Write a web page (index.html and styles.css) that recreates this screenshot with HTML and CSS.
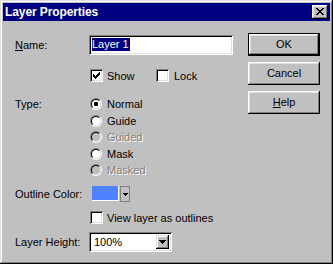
FILE: index.html
```html
<!DOCTYPE html>
<html>
<head>
<meta charset="utf-8">
<link rel="stylesheet" href="styles.css">
</head>
<body>
<div class="window">
  <div class="titlebar">
    <span class="title">Layer Properties</span>
    <div class="close">
      <svg width="8" height="7" viewBox="0 0 8 7" shape-rendering="crispEdges"><path d="M0 0h2v1H0zM6 0h2v1H6zM1 1h2v1H1zM5 1h2v1H5zM2 2h4v1H2zM3 3h2v1H3zM2 4h4v1H2zM1 5h2v1H1zM5 5h2v1H5zM0 6h2v1H0zM6 6h2v1H6z" fill="#000"/></svg>
    </div>
  </div>
  <div class="body">
    <div class="form">
      <div class="row row-name">
        <span class="label"><u>N</u>ame:</span>
        <div class="field"><span class="sel">Layer 1</span></div>
      </div>
      <div class="row row-checks">
        <span class="label"></span>
        <div class="checkitem w66">
          <span class="check"><svg width="7" height="7" viewBox="0 0 7 7" shape-rendering="crispEdges"><path d="M6 0h1v1H6zM5 1h2v1H5zM0 2h1v1H0zM4 2h3v1H4zM0 3h2v1H0zM3 3h3v1H3zM0 4h5v1H0zM1 5h3v1H1zM2 6h1v1H2z" fill="#000"/></svg></span>
          <span class="ctext">Show</span>
        </div>
        <div class="checkitem lock">
          <span class="check"></span>
          <span class="ctext">Lock</span>
        </div>
      </div>
      <div class="row row-type">
        <span class="label type-label">Type:</span>
        <div class="radios">
          <div class="radioitem"><span class="radio"><span class="radio-in"><span class="dot"></span></span></span><span class="ctext">Normal</span></div>
          <div class="radioitem"><span class="radio"><span class="radio-in"></span></span><span class="ctext">Guide</span></div>
          <div class="radioitem disabled"><span class="radio"><span class="radio-in"></span></span><span class="ctext">Guided</span></div>
          <div class="radioitem"><span class="radio"><span class="radio-in"></span></span><span class="ctext">Mask</span></div>
          <div class="radioitem disabled"><span class="radio"><span class="radio-in"></span></span><span class="ctext">Masked</span></div>
        </div>
      </div>
      <div class="row row-color">
        <span class="label">Outline Color:</span>
        <div class="colorpick">
          <span class="swatch"></span>
          <span class="swatch-arrow"><svg width="5" height="3" viewBox="0 0 5 3" shape-rendering="crispEdges"><path d="M0 0h5v1H0zM1 1h3v1H1zM2 2h1v1H2z" fill="#000"/></svg></span>
        </div>
      </div>
      <div class="row row-view">
        <span class="label"></span>
        <div class="checkitem">
          <span class="check"></span>
          <span class="ctext">View layer as outlines</span>
        </div>
      </div>
      <div class="row row-height">
        <span class="label">Layer Height:</span>
        <div class="select">
          <span class="select-text">100%</span>
          <span class="select-btn"><svg width="7" height="4" viewBox="0 0 7 4" shape-rendering="crispEdges"><path d="M0 0h7v1H0zM1 1h5v1H1zM2 2h3v1H2zM3 3h1v1H3z" fill="#000"/></svg></span>
        </div>
      </div>
    </div>
    <div class="buttons">
      <div class="btn default"><span class="btn-in">OK</span></div>
      <div class="btn"><span class="btn-in">Cancel</span></div>
      <div class="btn"><span class="btn-in"><u>H</u>elp</span></div>
    </div>
  </div>
</div>
</body>
</html>
```

FILE: styles.css
```css
html, body {
  margin: 0;
  padding: 0;
  background: #c0c0c0;
}
body {
  font-family: "Liberation Sans", Arial, sans-serif;
  font-size: 11px;
  color: #000;
}
.window {
  width: 333px;
  height: 264px;
  box-sizing: border-box;
  padding: 3px;
  background: #c0c0c0;
  box-shadow: inset -1px -1px #000, inset 1px 1px #dfdfdf, inset -2px -2px #808080, inset 2px 2px #fff;
}
.titlebar {
  height: 18px;
  background: #000080;
  display: flex;
  align-items: center;
  padding: 0 2px 0 2px;
}
.title {
  color: #fff;
  font-weight: bold;
  font-size: 12px;
  letter-spacing: -0.1px;
}
.close {
  margin-left: auto;
  width: 16px;
  height: 14px;
  box-sizing: border-box;
  background: #c0c0c0;
  box-shadow: inset -1px -1px #000, inset 1px 1px #fff, inset -2px -2px #808080, inset 2px 2px #dfdfdf;
  display: flex;
  align-items: center;
  justify-content: center;
  padding: 0 1px 1px 0;
}
.close svg { display: block; }
.body {
  display: flex;
  padding-left: 12px;
}
.form {
  width: 233px;
  display: flex;
  flex-direction: column;
}
.row {
  display: flex;
  align-items: center;
}
.label {
  width: 74px;
  flex: none;
  white-space: nowrap;
}
.row-name { margin-top: 14px; height: 20px; }
.row-checks { margin-top: 14px; height: 13px; }
.row-type { margin-top: 16px; align-items: flex-start; }
.row-color { margin-top: 10px; height: 15px; }
.row-view { margin-top: 10px; height: 13px; }
.row-height { margin-top: 8px; height: 20px; }
.type-label { line-height: 12px; }

.field {
  width: 144px;
  height: 20px;
  box-sizing: border-box;
  background: #fff;
  box-shadow: inset 1px 1px #808080, inset -1px -1px #fff, inset 2px 2px #000, inset -2px -2px #dfdfdf;
  padding: 3px 0 0 3px;
}
.sel {
  display: inline-block;
  background: #000080;
  color: #fff;
  line-height: 13px;
  height: 13px;
  padding: 0 1px 0 0;
}
.checkitem {
  display: flex;
  align-items: center;
  margin-left: 1px;
}
.checkitem.lock { margin-left: 0; }
.w66 { width: 66px; }
.check {
  width: 13px;
  height: 13px;
  box-sizing: border-box;
  background: #fff;
  box-shadow: inset 1px 1px #808080, inset -1px -1px #fff, inset 2px 2px #000, inset -2px -2px #dfdfdf;
  display: flex;
  padding: 3px 0 0 3px;
  flex: none;
}
.check svg { display: block; }
.ctext { margin-left: 4px; white-space: nowrap; }
.lock .ctext { margin-left: 5px; }
.radios {
  display: flex;
  flex-direction: column;
  gap: 4.5px;
  margin-left: 1px;
}
.radioitem {
  display: flex;
  align-items: center;
  height: 12px;
}
.radio {
  width: 12px;
  height: 12px;
  box-sizing: border-box;
  border-radius: 50%;
  border: 1px solid;
  border-color: #808080 #fff #fff #808080;
  display: flex;
  flex: none;
}
.radio-in {
  width: 10px;
  height: 10px;
  box-sizing: border-box;
  border-radius: 50%;
  border: 1px solid;
  border-color: #000 #dfdfdf #dfdfdf #000;
  background: #fff;
  display: flex;
  align-items: center;
  justify-content: center;
}
.dot {
  width: 4px;
  height: 4px;
  border-radius: 1px;
  background: #000;
}
.radioitem .ctext { margin-left: 5px; }
.disabled .radio-in { background: #c0c0c0; }
.disabled .ctext {
  color: #808080;
  text-shadow: 1px 1px 0 #fff;
}
.colorpick {
  display: flex;
  margin-left: 3px;
  height: 15px;
}
.swatch {
  width: 27px;
  height: 15px;
  box-sizing: border-box;
  background: #5082ff;
  border-right: 1px solid #fff;
  border-bottom: 1px solid #fff;
}
.swatch-arrow {
  width: 10px;
  height: 16px;
  box-sizing: border-box;
  margin-left: 1px;
  background: #c0c0c0;
  border: 1px solid #808080;
  display: flex;
  align-items: center;
  justify-content: center;
}
.swatch-arrow svg { display: block; }
.select {
  width: 83px;
  height: 20px;
  box-sizing: border-box;
  background: #fff;
  box-shadow: inset 1px 1px #808080, inset -1px -1px #fff, inset 2px 2px #000, inset -2px -2px #dfdfdf;
  display: flex;
  align-items: center;
  padding: 0 3px 0 5px;
}
.select-text { flex: 1; }
.select-btn {
  width: 13px;
  height: 14px;
  box-sizing: border-box;
  background: #c0c0c0;
  box-shadow: inset -1px -1px #000, inset 1px 1px #dfdfdf, inset -2px -2px #808080, inset 2px 2px #fff;
  display: flex;
  align-items: center;
  justify-content: center;
  padding-bottom: 1px;
}
.select-btn svg { display: block; }
.buttons {
  display: flex;
  flex-direction: column;
  gap: 6px;
  margin-top: 12px;
}
.btn {
  width: 72px;
  height: 23px;
  box-sizing: border-box;
  background: #c0c0c0;
  box-shadow: inset -1px -1px #000, inset 1px 1px #fff, inset -2px -2px #808080, inset 2px 2px #dfdfdf;
  display: flex;
}
.btn-in {
  flex: 1;
  display: flex;
  align-items: center;
  justify-content: center;
  padding-bottom: 1px;
}
.btn.default {
  box-shadow: none;
  border: 1px solid #000;
}
.btn.default .btn-in {
  box-shadow: inset -1px -1px #000, inset 1px 1px #fff, inset -2px -2px #808080, inset 2px 2px #dfdfdf;
}
```
